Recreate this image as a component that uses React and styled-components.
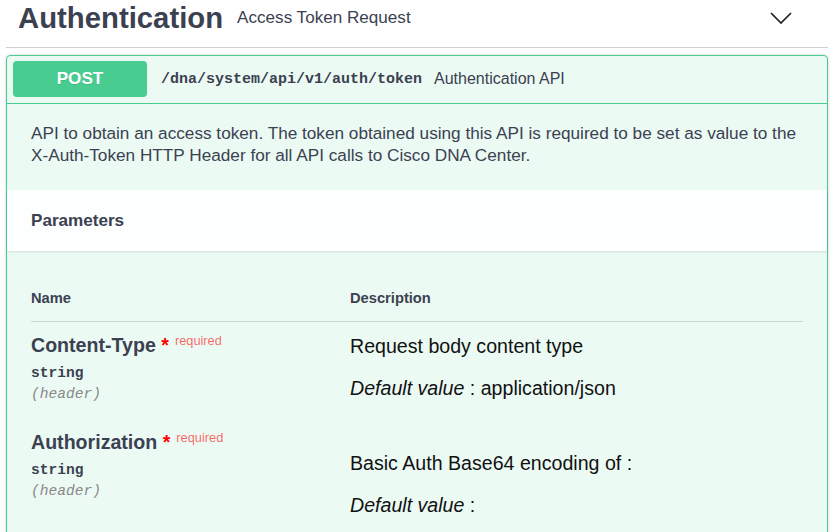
import React from "react";
import styled, { createGlobalStyle } from "styled-components";

const GlobalStyle = createGlobalStyle`
  html, body { margin: 0; padding: 0; background: #ffffff; }
  body { font-family: "Liberation Sans", Arial, sans-serif; color: #3b4151; }
  * { box-sizing: border-box; }
`;

const Page = styled.div`
  padding: 0 8px 0 6px;
`;

const TagHeader = styled.div`
  display: flex;
  align-items: center;
  justify-content: space-between;
  height: 48px;
  padding: 0 36px 11px 12px;
  border-bottom: 1px solid rgba(59, 65, 81, 0.25);
`;

const TitleGroup = styled.div`
  display: flex;
  align-items: center;
`;

const TagTitle = styled.h3`
  margin: 0;
  font-size: 29.3px;
  font-weight: 700;
  color: #3b4151;
`;

const TagSmall = styled.small`
  margin-left: 14px;
  font-size: 17.1px;
  color: #3b4151;
`;

const Chevron = styled.svg`
  display: block;
  width: 22px;
  height: 12px;
`;

const Opblock = styled.div`
  margin-top: 7px;
  border: 1px solid #49cc90;
  border-radius: 4px;
  background: rgba(73, 204, 144, 0.1);
  box-shadow: 0 0 3px rgba(0, 0, 0, 0.19);
`;

const Summary = styled.div`
  display: flex;
  align-items: center;
  padding: 5px 6px 6px;
  border-bottom: 1px solid #49cc90;
`;

const Method = styled.span`
  display: flex;
  align-items: center;
  justify-content: center;
  width: 134px;
  height: 36px;
  border-radius: 4px;
  background: #49cc90;
  color: #fff;
  font-size: 17.1px;
  font-weight: 700;
  text-shadow: 0 1px 0 rgba(0, 0, 0, 0.1);
`;

const Path = styled.span`
  padding: 0 12px 0 14px;
  font-family: "Liberation Mono", "Courier New", monospace;
  font-size: 15px;
  font-weight: 700;
  color: #3b4151;
`;

const SummaryDesc = styled.span`
  font-size: 16px;
  color: #3b4151;
`;

const DescriptionWrapper = styled.div`
  padding: 18px 24px 24px;
  font-size: 17.2px;
  line-height: 22px;
  color: #3b4151;
  p { margin: 0; }
`;

const SectionHeader = styled.div`
  display: flex;
  align-items: center;
  min-height: 61px;
  padding: 0 24px;
  background: rgba(255, 255, 255, 0.85);
  box-shadow: 0 1px 2px rgba(0, 0, 0, 0.1);
`;

const SectionTitle = styled.h4`
  margin: 0;
  font-size: 17.1px;
  font-weight: 700;
  color: #3b4151;
`;

const TableWrapper = styled.div`
  padding: 24px 24px 0;
`;

const ParamTable = styled.div`
  display: grid;
  grid-template-columns: 319px 1fr;
  align-items: start;
`;

const HeadCell = styled.div`
  padding: 15px 0;
  font-size: 14.7px;
  font-weight: 700;
  color: #3b4151;
  border-bottom: 1px solid rgba(59, 65, 81, 0.2);
`;

const NameCell = styled.div`
  padding: 12px 10px 8px 0;
`;

const ParamName = styled.div`
  font-size: 19.6px;
  line-height: 22px;
  font-weight: 700;
  color: #3b4151;
`;

const Star = styled.span`
  color: #ff0000;
`;

const Required = styled.span`
  position: relative;
  top: -7px;
  padding-left: 6px;
  font-size: 12.8px;
  font-weight: 400;
  color: rgba(255, 0, 0, 0.6);
`;

const ParamType = styled.div`
  padding: 6px 0 4px;
  font-family: "Liberation Mono", "Courier New", monospace;
  font-size: 14.6px;
  line-height: 17px;
  font-weight: 700;
  color: #3b4151;
`;

const ParamIn = styled.div`
  font-family: "Liberation Mono", "Courier New", monospace;
  font-size: 14.6px;
  line-height: 17px;
  font-style: italic;
  color: #888888;
`;

const DescCell = styled.div`
  padding: ${(p) => (p.$offset ? "33px" : "13px")} 10px 20px 0;
  font-size: 19.6px;
  line-height: 22px;
  color: #111111;
  p { margin: 0 0 20px; }
  p:last-child { margin-bottom: 0; }
`;

const params = [
  {
    name: "Content-Type",
    type: "string",
    in: "header",
    desc: "Request body content type",
    def: "application/json",
    offset: false,
  },
  {
    name: "Authorization",
    type: "string",
    in: "header",
    desc: "Basic Auth Base64 encoding of :",
    def: "",
    offset: true,
  },
];

export default function App() {
  return (
    <Page>
      <GlobalStyle />
      <TagHeader>
        <TitleGroup>
          <TagTitle>Authentication</TagTitle>
          <TagSmall>Access Token Request</TagSmall>
        </TitleGroup>
        <Chevron viewBox="0 0 22 12" fill="none">
          <polyline points="1,1 11,11 21,1" stroke="#222" strokeWidth="1.7" />
        </Chevron>
      </TagHeader>
      <Opblock>
        <Summary>
          <Method>POST</Method>
          <Path>/dna/system/api/v1/auth/token</Path>
          <SummaryDesc>Authentication API</SummaryDesc>
        </Summary>
        <DescriptionWrapper>
          <p>
            API to obtain an access token. The token obtained using this API is required to be set as value to the
            X-Auth-Token HTTP Header for all API calls to Cisco DNA Center.
          </p>
        </DescriptionWrapper>
        <SectionHeader>
          <SectionTitle>Parameters</SectionTitle>
        </SectionHeader>
        <TableWrapper>
          <ParamTable>
            <HeadCell>Name</HeadCell>
            <HeadCell>Description</HeadCell>
            {params.map((p) => (
              <React.Fragment key={p.name}>
                <NameCell>
                  <ParamName>
                    {p.name}
                    <Star>&nbsp;*</Star>
                    <Required>required</Required>
                  </ParamName>
                  <ParamType>{p.type}</ParamType>
                  <ParamIn>({p.in})</ParamIn>
                </NameCell>
                <DescCell $offset={p.offset}>
                  <p>{p.desc}</p>
                  <p>
                    <i>Default value</i> : {p.def}
                  </p>
                </DescCell>
              </React.Fragment>
            ))}
          </ParamTable>
        </TableWrapper>
      </Opblock>
    </Page>
  );
}
